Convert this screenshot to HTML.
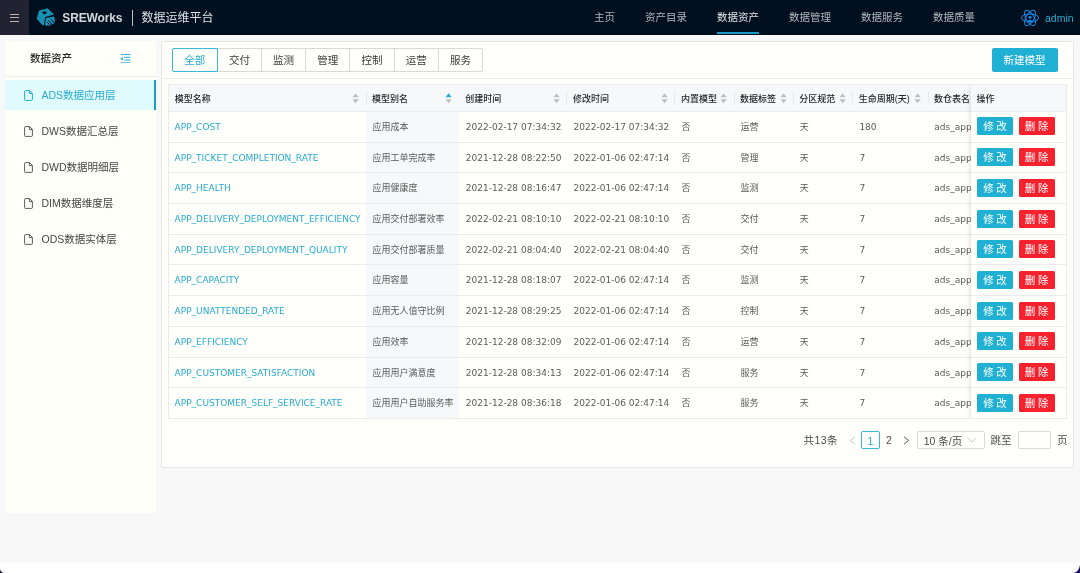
<!DOCTYPE html>
<html lang="zh-CN">
<head>
<meta charset="utf-8">
<title>SREWorks 数据运维平台</title>
<style>
*{box-sizing:border-box;margin:0;padding:0}
html,body{width:1080px;height:573px;overflow:hidden}
body{position:relative;background:#f8f8f9;font-family:"Liberation Sans","Noto Sans CJK SC",sans-serif;font-size:9px;color:#595959;-webkit-font-smoothing:antialiased}
.abs{position:absolute}
#root{position:absolute;left:0;top:0;width:1080px;height:573px;will-change:transform}
/* header */
#hdr{left:0;top:0;width:1080px;height:35px;background:#020f1e}
#burger{left:0;top:0;width:29px;height:35px;background:#222332}
#burger i{position:absolute;left:10px;width:8.5px;height:1.3px;background:#bdb6ae}
#brand{left:62.3px;top:0;height:35px;line-height:37px;font-size:12px;font-weight:bold;color:#d3d7dc;letter-spacing:-0.15px}
#bar{left:131.5px;top:10px;width:1.3px;height:15.7px;background:#b9bec4}
#plat{left:141.5px;top:0;height:35px;line-height:36.2px;font-size:12px;color:#dfe2e6}
.nav{top:0;height:35px;line-height:34.7px;font-size:10.5px;color:#b1b6bc;white-space:nowrap}
.nav.on{color:#e2e5e9}
#navline{left:717px;top:31.7px;width:42px;height:2px;background:#1b9cc2}
#admin{left:1045px;top:0;height:35px;line-height:36px;font-size:10.5px;color:#25aacd}
/* sidebar */
#side{left:5px;top:41px;width:150.5px;height:472px;background:#fffffa}
#stitle{left:25px;top:0;height:35.5px;line-height:35.2px;font-size:10.5px;font-weight:500;color:#262626}
#sdiv{left:0;top:35px;width:150.5px;height:1px;background:#ececec}
.mi{left:0;width:150.5px;height:30px;line-height:31.4px;font-size:10.5px;color:#444;padding-left:36.5px;white-space:nowrap}
.mi.on{background:#e0fbfd;color:#27abd0;border-right:2.2px solid #1a9dc6}
.mi svg{position:absolute;left:18.5px;top:9.5px}
/* card */
#card{left:161px;top:41px;width:913px;height:427px;background:#fffffb;border:1px solid #e6e7e8;border-radius:2px}
#cardline{left:0;top:35.5px;width:911px;height:1px;background:#ececec}
.rb{top:5.5px;height:24px;line-height:23.4px;width:45.3px;border:1px solid #d9d9d9;border-left-width:0;text-align:center;font-size:10.5px;color:#3a3a3a;background:#fffffb}
.rb.on{border:1px solid #3bb8d8;color:#27abd0;border-radius:2px 0 0 2px;z-index:2}
.rb.last{border-radius:0 2px 2px 0}
#newbtn{left:829.6px;top:5.5px;width:66px;height:24px;line-height:25.3px;background:#20b0d4;border-radius:2px;color:#fff;font-size:10.5px;text-align:center}
/* table */
#tbl{left:5.8px;top:41.7px;width:899px;height:335.2px;border:1px solid #ebebeb;border-bottom:0;overflow:hidden}
#thead{left:0;top:0;width:899px;height:27.5px;background:#f7f8f9;border-bottom:1px solid #ebebeb}
.th{top:0;height:27px;line-height:28px;font-weight:500;font-size:9px;color:#262626;white-space:nowrap}
.sep{top:6.8px;width:1px;height:13.4px;background:#e9e9e9}
.sorter{top:8.5px;width:7.2px;height:10.4px}
.row{left:0;width:899px;height:30.68px;border-bottom:1px solid #ebebeb}
.c{top:0;height:30px;line-height:31.3px;white-space:nowrap;font-size:9px;color:#5a5a5a}
.c.lnk{color:#27abd0}
.c.num,.c.lnk,.c.lat{font-family:"DejaVu Sans","Liberation Sans","Noto Sans CJK SC",sans-serif}
#sortedbg{left:197px;top:27px;width:93.5px;height:308px;background:#f7f8f9}
#fix{left:802px;top:0;width:97px;height:336px;background:#fffffb;box-shadow:-3px 0 5px -2px rgba(0,0,0,.13)}
#fixhead{left:0;top:0;width:98px;height:27.5px;background:#f7f8f9;border-bottom:1px solid #ebebeb}
.btn{top:5.4px;width:35.3px;height:18px;line-height:18.6px;border-radius:1.5px;color:#fff;font-size:10.5px;text-align:center;letter-spacing:2.6px;padding-left:2.6px}
.btn.e{left:6.5px;background:#20b0d4}
.btn.d{left:47.8px;width:36.1px;background:#f5222d}
/* pagination */
.pg{top:389px;height:18px;line-height:19.6px;font-size:10.5px;color:#4a4a4a;white-space:nowrap}
</style>
</head>
<body>
<div id="root">
<div id="hdr" class="abs">
  <div id="burger" class="abs"><i style="top:13.8px"></i><i style="top:17.2px"></i><i style="top:20.6px"></i></div>
  <svg class="abs" style="left:36px;top:7px" width="20" height="20" viewBox="0 0 20 20">
    <path d="M2.9 3.64 L11.54 1.28 L18.08 7.57 L9.05 10.1 L7.95 18.3 L6.3 18 L0.8 11.75 Z" fill="#1792b5"/>
    <path d="M5.9 5.5 L8.9 4.1 L11.1 6.1 L8.1 7.4 Z" fill="#020f1e"/>
    <path d="M9.9 11.05 L18 9.6 L19.05 13.4 L18 16.7 L13 18.8 L8.95 18.3 Z" fill="#1792b5"/>
    <path d="M11.2 15.2 L15 19 M12.5 13.5 L16.9 18.5 M15.3 12.4 L19.2 17.4" stroke="#020f1e" stroke-width="1" fill="none"/>
  </svg>
  <div id="brand" class="abs">SREWorks</div>
  <div id="bar" class="abs"></div>
  <div id="plat" class="abs">数据运维平台</div>
  <div class="abs nav" style="left:594px">主页</div>
  <div class="abs nav" style="left:645px">资产目录</div>
  <div class="abs nav on" style="left:717px">数据资产</div>
  <div class="abs nav" style="left:789px">数据管理</div>
  <div class="abs nav" style="left:861px">数据服务</div>
  <div class="abs nav" style="left:933px">数据质量</div>
  <div id="navline" class="abs"></div>
  <svg class="abs" style="left:1020px;top:8px" width="20" height="20" viewBox="0 0 20 20" fill="none" stroke="#1c86e2" stroke-width="1">
    <ellipse cx="10" cy="10" rx="8.6" ry="4"/>
    <ellipse cx="10" cy="10" rx="8.6" ry="4" transform="rotate(60 10 10)"/>
    <ellipse cx="10" cy="10" rx="8.6" ry="4" transform="rotate(-60 10 10)"/>
    <circle cx="10" cy="9.2" r="1.5" fill="#1c86e2" stroke="none"/>
    <path d="M7.6 14 C7.8 10.9 12.2 10.9 12.4 14 Z" fill="#1c86e2" stroke="none"/>
  </svg>
  <div id="admin" class="abs">admin</div>
</div>

<div id="side" class="abs">
  <div id="stitle" class="abs">数据资产</div>
  <svg class="abs" style="left:114.6px;top:12.8px" width="11" height="9.5" viewBox="0 0 11 10" preserveAspectRatio="none" fill="#35b3d4">
    <rect x="0.8" y="0" width="9.6" height="1.1"/><rect x="4.2" y="2.9" width="6.2" height="1.1"/><rect x="4.2" y="5.8" width="6.2" height="1.1"/><rect x="0.8" y="8.7" width="9.6" height="1.1"/>
    <path d="M0.3 4.9 L2.9 2.9 L2.9 6.9 Z"/>
  </svg>
  <div id="sdiv" class="abs"></div>
  <div class="abs mi on" style="top:39px"><svg width="9" height="11" viewBox="0 0 9 11" fill="none" stroke="#27abd0" stroke-width="1"><path d="M1.5 0.6 H5.6 L8.4 3.4 V9.6 Q8.4 10.4 7.6 10.4 H1.5 Q0.6 10.4 0.6 9.6 V1.4 Q0.6 0.6 1.5 0.6 Z M5.4 0.8 V3.6 H8.2"/></svg>ADS数据应用层</div>
  <div class="abs mi" style="top:75px"><svg width="9" height="11" viewBox="0 0 9 11" fill="none" stroke="#4a4a4a" stroke-width="0.9"><path d="M1.5 0.6 H5.6 L8.4 3.4 V9.6 Q8.4 10.4 7.6 10.4 H1.5 Q0.6 10.4 0.6 9.6 V1.4 Q0.6 0.6 1.5 0.6 Z M5.4 0.8 V3.6 H8.2"/></svg>DWS数据汇总层</div>
  <div class="abs mi" style="top:111px"><svg width="9" height="11" viewBox="0 0 9 11" fill="none" stroke="#4a4a4a" stroke-width="0.9"><path d="M1.5 0.6 H5.6 L8.4 3.4 V9.6 Q8.4 10.4 7.6 10.4 H1.5 Q0.6 10.4 0.6 9.6 V1.4 Q0.6 0.6 1.5 0.6 Z M5.4 0.8 V3.6 H8.2"/></svg>DWD数据明细层</div>
  <div class="abs mi" style="top:147px"><svg width="9" height="11" viewBox="0 0 9 11" fill="none" stroke="#4a4a4a" stroke-width="0.9"><path d="M1.5 0.6 H5.6 L8.4 3.4 V9.6 Q8.4 10.4 7.6 10.4 H1.5 Q0.6 10.4 0.6 9.6 V1.4 Q0.6 0.6 1.5 0.6 Z M5.4 0.8 V3.6 H8.2"/></svg>DIM数据维度层</div>
  <div class="abs mi" style="top:183px"><svg width="9" height="11" viewBox="0 0 9 11" fill="none" stroke="#4a4a4a" stroke-width="0.9"><path d="M1.5 0.6 H5.6 L8.4 3.4 V9.6 Q8.4 10.4 7.6 10.4 H1.5 Q0.6 10.4 0.6 9.6 V1.4 Q0.6 0.6 1.5 0.6 Z M5.4 0.8 V3.6 H8.2"/></svg>ODS数据实体层</div>
</div>

<div id="card" class="abs">
  <div class="abs rb on" style="left:9.9px;width:45.9px">全部</div>
  <div class="abs rb" style="left:55.8px;width:44.2px">交付</div>
  <div class="abs rb" style="left:100.0px;width:44.2px">监测</div>
  <div class="abs rb" style="left:144.2px;width:44.2px">管理</div>
  <div class="abs rb" style="left:188.4px;width:44.2px">控制</div>
  <div class="abs rb" style="left:232.6px;width:44.2px">运营</div>
  <div class="abs rb last" style="left:276.8px;width:44.2px">服务</div>
  <div id="newbtn" class="abs">新建模型</div>
  <div id="cardline" class="abs"></div>
  <div id="tbl" class="abs">
    <div id="thead" class="abs"></div>
    <div id="sortedbg" class="abs"></div>
    <div class="abs th" style="left:6.0px">模型名称</div>
    <svg class="abs sorter" style="left:183.7px" viewBox="0 0 6 9"><path d="M3 0.2 L5.6 3.6 H0.4 Z" fill="#bfbfbf"/><path d="M3 8.8 L5.6 5.4 H0.4 Z" fill="#bfbfbf"/></svg>
    <div class="abs th" style="left:203.3px">模型别名</div>
    <svg class="abs sorter" style="left:276.2px" viewBox="0 0 6 9"><path d="M3 0.2 L5.6 3.6 H0.4 Z" fill="#27abd0"/><path d="M3 8.8 L5.6 5.4 H0.4 Z" fill="#bfbfbf"/></svg>
    <div class="abs th" style="left:296.5px">创建时间</div>
    <svg class="abs sorter" style="left:384.4px" viewBox="0 0 6 9"><path d="M3 0.2 L5.6 3.6 H0.4 Z" fill="#bfbfbf"/><path d="M3 8.8 L5.6 5.4 H0.4 Z" fill="#bfbfbf"/></svg>
    <div class="abs th" style="left:404.3px">修改时间</div>
    <svg class="abs sorter" style="left:492.2px" viewBox="0 0 6 9"><path d="M3 0.2 L5.6 3.6 H0.4 Z" fill="#bfbfbf"/><path d="M3 8.8 L5.6 5.4 H0.4 Z" fill="#bfbfbf"/></svg>
    <div class="abs th" style="left:512.1px">内置模型</div>
    <svg class="abs sorter" style="left:551.7px" viewBox="0 0 6 9"><path d="M3 0.2 L5.6 3.6 H0.4 Z" fill="#bfbfbf"/><path d="M3 8.8 L5.6 5.4 H0.4 Z" fill="#bfbfbf"/></svg>
    <div class="abs th" style="left:571.3px">数据标签</div>
    <svg class="abs sorter" style="left:610.9px" viewBox="0 0 6 9"><path d="M3 0.2 L5.6 3.6 H0.4 Z" fill="#bfbfbf"/><path d="M3 8.8 L5.6 5.4 H0.4 Z" fill="#bfbfbf"/></svg>
    <div class="abs th" style="left:630.4px">分区规范</div>
    <svg class="abs sorter" style="left:670.4px" viewBox="0 0 6 9"><path d="M3 0.2 L5.6 3.6 H0.4 Z" fill="#bfbfbf"/><path d="M3 8.8 L5.6 5.4 H0.4 Z" fill="#bfbfbf"/></svg>
    <div class="abs th" style="left:690.0px">生命周期(天)</div>
    <svg class="abs sorter" style="left:745.6px" viewBox="0 0 6 9"><path d="M3 0.2 L5.6 3.6 H0.4 Z" fill="#bfbfbf"/><path d="M3 8.8 L5.6 5.4 H0.4 Z" fill="#bfbfbf"/></svg>
    <div class="abs th" style="left:765.2px">数仓表名</div>
    <div class="abs sep" style="left:196.8px"></div>
    <div class="abs sep" style="left:397.2px"></div>
    <div class="abs sep" style="left:505.2px"></div>
    <div class="abs sep" style="left:565.0px"></div>
    <div class="abs sep" style="left:624.2px"></div>
    <div class="abs sep" style="left:683.4px"></div>
    <div class="abs sep" style="left:759.0px"></div>
    <div class="abs row" style="top:27.4px"><div class="abs c lnk" style="left:5.8px">APP_COST</div><div class="abs c" style="left:203.7px">应用成本</div><div class="abs c num" style="left:297.0px">2022-02-17 07:34:32</div><div class="abs c num" style="left:404.8px">2022-02-17 07:34:32</div><div class="abs c" style="left:512.6px">否</div><div class="abs c" style="left:571.8px">运营</div><div class="abs c" style="left:630.9px">天</div><div class="abs c num" style="left:690.6px">180</div><div class="abs c lat" style="left:765.5px">ads_app_x</div></div>
    <div class="abs row" style="top:58.08px"><div class="abs c lnk" style="left:5.8px">APP_TICKET_COMPLETION_RATE</div><div class="abs c" style="left:203.7px">应用工单完成率</div><div class="abs c num" style="left:297.0px">2021-12-28 08:22:50</div><div class="abs c num" style="left:404.8px">2022-01-06 02:47:14</div><div class="abs c" style="left:512.6px">否</div><div class="abs c" style="left:571.8px">管理</div><div class="abs c" style="left:630.9px">天</div><div class="abs c num" style="left:690.6px">7</div><div class="abs c lat" style="left:765.5px">ads_app_x</div></div>
    <div class="abs row" style="top:88.76px"><div class="abs c lnk" style="left:5.8px">APP_HEALTH</div><div class="abs c" style="left:203.7px">应用健康度</div><div class="abs c num" style="left:297.0px">2021-12-28 08:16:47</div><div class="abs c num" style="left:404.8px">2022-01-06 02:47:14</div><div class="abs c" style="left:512.6px">否</div><div class="abs c" style="left:571.8px">监测</div><div class="abs c" style="left:630.9px">天</div><div class="abs c num" style="left:690.6px">7</div><div class="abs c lat" style="left:765.5px">ads_app_x</div></div>
    <div class="abs row" style="top:119.44px"><div class="abs c lnk" style="left:5.8px">APP_DELIVERY_DEPLOYMENT_EFFICIENCY</div><div class="abs c" style="left:203.7px">应用交付部署效率</div><div class="abs c num" style="left:297.0px">2022-02-21 08:10:10</div><div class="abs c num" style="left:404.8px">2022-02-21 08:10:10</div><div class="abs c" style="left:512.6px">否</div><div class="abs c" style="left:571.8px">交付</div><div class="abs c" style="left:630.9px">天</div><div class="abs c num" style="left:690.6px">7</div><div class="abs c lat" style="left:765.5px">ads_app_x</div></div>
    <div class="abs row" style="top:150.12px"><div class="abs c lnk" style="left:5.8px">APP_DELIVERY_DEPLOYMENT_QUALITY</div><div class="abs c" style="left:203.7px">应用交付部署质量</div><div class="abs c num" style="left:297.0px">2022-02-21 08:04:40</div><div class="abs c num" style="left:404.8px">2022-02-21 08:04:40</div><div class="abs c" style="left:512.6px">否</div><div class="abs c" style="left:571.8px">交付</div><div class="abs c" style="left:630.9px">天</div><div class="abs c num" style="left:690.6px">7</div><div class="abs c lat" style="left:765.5px">ads_app_x</div></div>
    <div class="abs row" style="top:180.8px"><div class="abs c lnk" style="left:5.8px">APP_CAPACITY</div><div class="abs c" style="left:203.7px">应用容量</div><div class="abs c num" style="left:297.0px">2021-12-28 08:18:07</div><div class="abs c num" style="left:404.8px">2022-01-06 02:47:14</div><div class="abs c" style="left:512.6px">否</div><div class="abs c" style="left:571.8px">监测</div><div class="abs c" style="left:630.9px">天</div><div class="abs c num" style="left:690.6px">7</div><div class="abs c lat" style="left:765.5px">ads_app_x</div></div>
    <div class="abs row" style="top:211.48px"><div class="abs c lnk" style="left:5.8px">APP_UNATTENDED_RATE</div><div class="abs c" style="left:203.7px">应用无人值守比例</div><div class="abs c num" style="left:297.0px">2021-12-28 08:29:25</div><div class="abs c num" style="left:404.8px">2022-01-06 02:47:14</div><div class="abs c" style="left:512.6px">否</div><div class="abs c" style="left:571.8px">控制</div><div class="abs c" style="left:630.9px">天</div><div class="abs c num" style="left:690.6px">7</div><div class="abs c lat" style="left:765.5px">ads_app_x</div></div>
    <div class="abs row" style="top:242.16px"><div class="abs c lnk" style="left:5.8px">APP_EFFICIENCY</div><div class="abs c" style="left:203.7px">应用效率</div><div class="abs c num" style="left:297.0px">2021-12-28 08:32:09</div><div class="abs c num" style="left:404.8px">2022-01-06 02:47:14</div><div class="abs c" style="left:512.6px">否</div><div class="abs c" style="left:571.8px">运营</div><div class="abs c" style="left:630.9px">天</div><div class="abs c num" style="left:690.6px">7</div><div class="abs c lat" style="left:765.5px">ads_app_x</div></div>
    <div class="abs row" style="top:272.84px"><div class="abs c lnk" style="left:5.8px">APP_CUSTOMER_SATISFACTION</div><div class="abs c" style="left:203.7px">应用用户满意度</div><div class="abs c num" style="left:297.0px">2021-12-28 08:34:13</div><div class="abs c num" style="left:404.8px">2022-01-06 02:47:14</div><div class="abs c" style="left:512.6px">否</div><div class="abs c" style="left:571.8px">服务</div><div class="abs c" style="left:630.9px">天</div><div class="abs c num" style="left:690.6px">7</div><div class="abs c lat" style="left:765.5px">ads_app_x</div></div>
    <div class="abs row" style="top:303.52px"><div class="abs c lnk" style="left:5.8px">APP_CUSTOMER_SELF_SERVICE_RATE</div><div class="abs c" style="left:203.7px">应用用户自助服务率</div><div class="abs c num" style="left:297.0px">2021-12-28 08:36:18</div><div class="abs c num" style="left:404.8px">2022-01-06 02:47:14</div><div class="abs c" style="left:512.6px">否</div><div class="abs c" style="left:571.8px">服务</div><div class="abs c" style="left:630.9px">天</div><div class="abs c num" style="left:690.6px">7</div><div class="abs c lat" style="left:765.5px">ads_app_x</div></div>
    <div id="fix" class="abs">
      <div id="fixhead" class="abs"></div>
      <div class="abs th" style="left:5.8px">操作</div>
      <div class="abs row" style="top:27.4px;width:98px"><div class="abs btn e">修改</div><div class="abs btn d">删除</div></div>
      <div class="abs row" style="top:58.08px;width:98px"><div class="abs btn e">修改</div><div class="abs btn d">删除</div></div>
      <div class="abs row" style="top:88.76px;width:98px"><div class="abs btn e">修改</div><div class="abs btn d">删除</div></div>
      <div class="abs row" style="top:119.44px;width:98px"><div class="abs btn e">修改</div><div class="abs btn d">删除</div></div>
      <div class="abs row" style="top:150.12px;width:98px"><div class="abs btn e">修改</div><div class="abs btn d">删除</div></div>
      <div class="abs row" style="top:180.8px;width:98px"><div class="abs btn e">修改</div><div class="abs btn d">删除</div></div>
      <div class="abs row" style="top:211.48px;width:98px"><div class="abs btn e">修改</div><div class="abs btn d">删除</div></div>
      <div class="abs row" style="top:242.16px;width:98px"><div class="abs btn e">修改</div><div class="abs btn d">删除</div></div>
      <div class="abs row" style="top:272.84px;width:98px"><div class="abs btn e">修改</div><div class="abs btn d">删除</div></div>
      <div class="abs row" style="top:303.52px;width:98px"><div class="abs btn e">修改</div><div class="abs btn d">删除</div></div>
    </div>
  </div>
  <div class="abs pg" style="left:641.6px;letter-spacing:.4px">共13条</div>
  <svg class="abs" style="left:687.0px;top:393.5px" width="7" height="9" viewBox="0 0 7 9" fill="none" stroke="#c4c4c4" stroke-width="1"><path d="M5.8 0.9 L1.4 4.5 L5.8 8.1"/></svg>
  <div class="abs pg" style="left:698.9px;width:18.9px;text-align:center;border:1px solid #3bb8d8;border-radius:2px;line-height:18.1px;color:#27abd0">1</div>
  <div class="abs pg" style="left:718.0px;width:18px;text-align:center">2</div>
  <svg class="abs" style="left:741.3px;top:393.5px" width="7" height="9" viewBox="0 0 7 9" fill="none" stroke="#4a4a4a" stroke-width="1"><path d="M1.2 0.9 L5.6 4.5 L1.2 8.1"/></svg>
  <div class="abs pg" style="left:755.2px;width:68px;border:1px solid #d9d9d9;border-radius:2px;line-height:18.1px;padding-left:5.5px">10 条/页</div>
  <svg class="abs" style="left:805.8px;top:396px" width="8" height="5" viewBox="0 0 8 5" fill="none" stroke="#bdbdbd" stroke-width="0.9"><path d="M0.5 0.5 L4 4.2 L7.5 0.5"/></svg>
  <div class="abs pg" style="left:828.6px">跳至</div>
  <div class="abs pg" style="left:855.5px;width:33.5px;border:1px solid #d9d9d9;border-radius:2px"></div>
  <div class="abs pg" style="left:895.0px">页</div>
</div>
<div class="abs" style="left:0;top:563px;width:1080px;height:10px;background:#fff"></div>
<svg class="abs" style="left:1066px;top:559px" width="14" height="14" viewBox="0 0 14 14"><path d="M14 6 Q13 13 7 14 H14 Z" fill="#1d0a66"/></svg>
<svg class="abs" style="left:0;top:569px" width="4" height="4" viewBox="0 0 4 4"><path d="M0 0 Q0.5 3.5 4 4 H0 Z" fill="#150a3a"/></svg>
</div>
</body>
</html>
